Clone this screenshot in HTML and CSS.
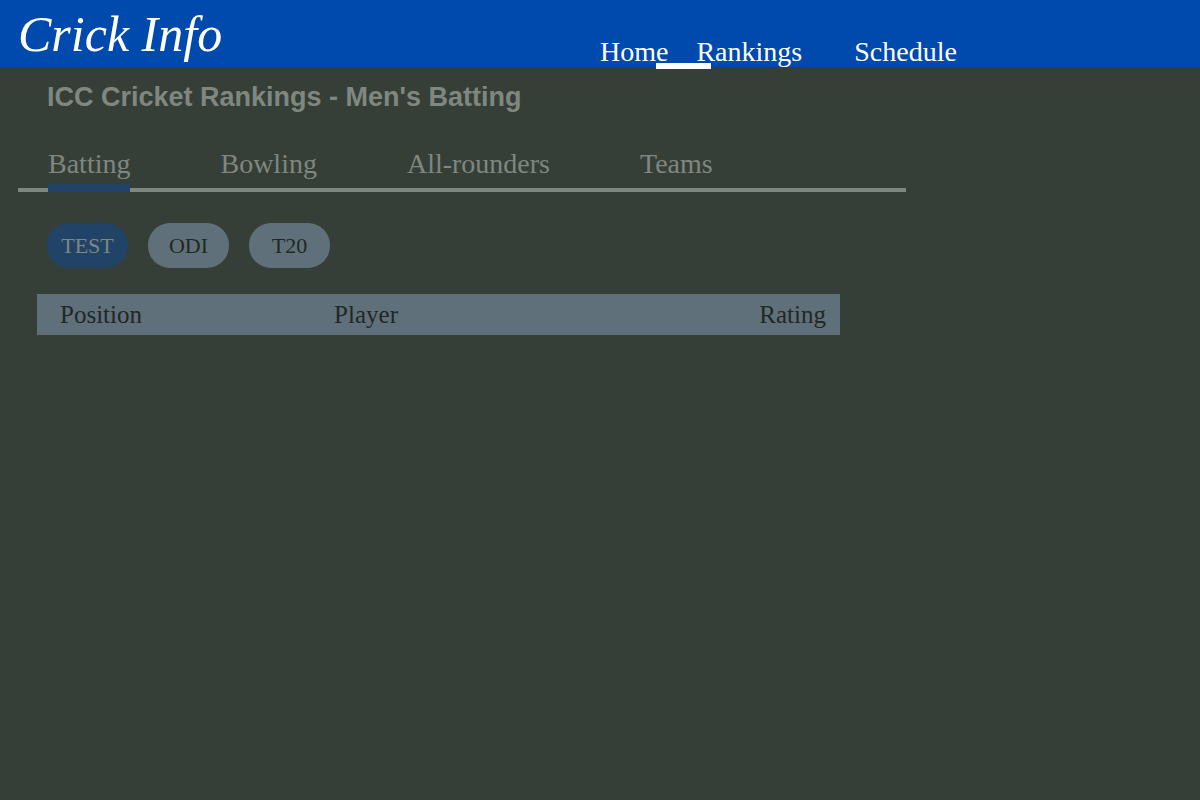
FILE: index.html
```html
<!DOCTYPE html>
<html lang="en">
<head>
<meta charset="utf-8">
<meta name="viewport" content="width=device-width, initial-scale=1">
<title>Crick Info - Rankings</title>
<link rel="stylesheet" href="styles.css">
</head>
<body>
<header class="site-header">
  <a class="brand" href="#">Crick Info</a>
  <nav class="site-nav" aria-label="Main">
    <a class="nav-home" href="#">Home</a>
    <a class="nav-rankings" href="#" aria-current="page">Rankings</a>
    <a class="nav-schedule" href="#">Schedule</a>
  </nav>
</header>
<main class="content">
  <h1 class="title">ICC Cricket Rankings - Men's Batting</h1>
  <nav class="tabs" aria-label="Categories">
    <a class="tab tab-active" href="#">Batting</a>
    <a class="tab" href="#">Bowling</a>
    <a class="tab" href="#">All-rounders</a>
    <a class="tab" href="#">Teams</a>
  </nav>
  <div class="formats">
    <button class="pill pill-active" type="button">TEST</button>
    <button class="pill" type="button">ODI</button>
    <button class="pill" type="button">T20</button>
  </div>
  <table class="rankings">
    <thead>
      <tr><th class="col-position" scope="col">Position</th><th class="col-player" scope="col">Player</th><th class="col-rating" scope="col">Rating</th></tr>
    </thead>
  </table>
</main>
</body>
</html>
```

FILE: styles.css
```css
* { box-sizing: border-box; }

body {
  margin: 0;
  min-height: 100vh;
  background: #363f37;
  color: #7f8781;
  font-family: "Liberation Serif", "Times New Roman", serif;
}

a { color: inherit; text-decoration: none; }

.site-header {
  display: grid;
  grid-template-columns: 1fr 1fr;
  min-height: 67px;
  background: #004aad;
  color: #fff;
}

.brand {
  padding: 6px 0 0 18px;
  font-size: 50px;
  font-style: italic;
  line-height: 56px;
}

.site-nav {
  display: flex;
  align-items: flex-end;
  font-size: 28px;
  line-height: 30px;
}

.nav-rankings { position: relative; margin: 0 52px 0 28px; }

.nav-rankings::after {
  content: "";
  position: absolute;
  left: -40px;
  bottom: -2px;
  width: 55px;
  height: 6px;
  background: #fff;
}

.content { padding: 12px 18px; }

.title {
  margin: 0 0 0 29px;
  font: 700 27px/36px "Liberation Sans", Arial, sans-serif;
}

.tabs {
  display: flex;
  gap: 90px;
  width: 77%;
  max-width: 888px;
  margin-top: 32px;
  padding-left: 30px;
  border-bottom: 4px solid #7f8781;
  font-size: 28px;
  line-height: 34px;
}

.tab { padding-bottom: 7px; }

.tab-active {
  margin-bottom: -4px;
  border-bottom: 8px solid #214367;
  padding-bottom: 3px;
}

.formats {
  display: flex;
  gap: 20px;
  margin: 31px 0 26px 29px;
}

.pill {
  width: 81px;
  height: 45px;
  padding: 0;
  border: 0;
  border-radius: 22px;
  background: #5f707a;
  color: #202824;
  font: 22px/28px "Liberation Serif", "Times New Roman", serif;
}

.pill-active { background: #214367; color: #7f8781; }

.rankings {
  width: 69%;
  max-width: 803px;
  margin-left: 19px;
  border-collapse: collapse;
  table-layout: fixed;
  background: #5f707a;
  color: #202824;
  font-size: 25px;
  line-height: 41px;
}

.rankings th { padding: 0; font-weight: 400; text-align: left; }
.rankings .col-position { width: 37%; padding-left: 23px; }
.rankings .col-rating { padding-right: 14px; text-align: right; }
```
